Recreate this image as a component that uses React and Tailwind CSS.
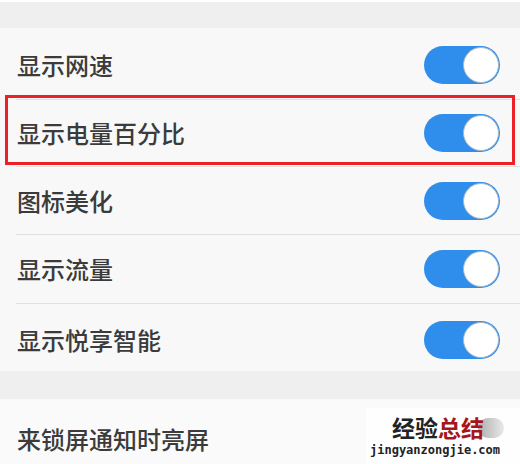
import React from "react";

const cjk = { fontFamily: '"Noto Sans CJK SC", "Noto Sans", sans-serif' };

function Toggle({ on = true }) {
  return (
    <div className={`relative w-[76px] h-[38px] rounded-full ${on ? "bg-[#2f8eec]" : "bg-[#dcdcdc]"}`}>
      <div
        className={`absolute top-[1px] ${on ? "right-[1px]" : "left-[1px]"} w-[36px] h-[36px] rounded-full bg-white border-[1.5px] border-[#a9b7c2]`}
      />
    </div>
  );
}

function Row({ label, h, divider = true }) {
  return (
    <div className={`flex flex-col ${h}`}>
      <div className="flex-1 flex items-center justify-between pl-[17px] pr-[20px]">
        <span className="text-[24px] font-medium leading-none text-[#3b3b3b]" style={cjk}>
          {label}
        </span>
        <Toggle />
      </div>
      <div className={`ml-[16px] h-[1.5px] ${divider ? "bg-[#e0e0e0]" : "bg-transparent"}`} />
    </div>
  );
}

export default function App() {
  return (
    <div className="relative w-[520px] h-[464px] overflow-hidden bg-[#f8f8f8]">
      <div className="h-[28px] bg-[#efefef] border-t-2 border-white" />
      <Row label="显示网速" h="h-[72px] pt-[4px]" />
      <Row label="显示电量百分比" h="h-[67px]" />
      <Row label="图标美化" h="h-[68px] pt-[2px]" />
      <Row label="显示流量" h="h-[69px]" />
      <Row label="显示悦享智能" h="h-[67px] pt-[6px]" divider={false} />
      <div className="h-[28px] bg-[#efefef]" />
      <div className="flex items-center pl-[17px] h-[80px] bg-[#fafafa]">
        <span className="text-[24px] font-medium leading-none text-[#3b3b3b]" style={cjk}>
          来锁屏通知时亮屏
        </span>
      </div>

      {/* red highlight box */}
      <div className="absolute left-[5px] top-[95px] w-[510px] h-[70px] border-[3px] border-[#ec2127]" />

      {/* watermark */}
      <div className="absolute right-0 bottom-0 w-[154px] h-[56px] bg-white/80 flex flex-col items-start pl-[4px] pt-[8px] gap-[5px]">
        <div className="relative ml-[22px] flex text-[23px] font-bold leading-none" style={cjk}>
          <div className="absolute left-[86px] top-[2px] w-[26px] h-[20px] rounded-full bg-gradient-to-r from-[#9a9a9a] to-[#e4e4e4] opacity-80" />
          <span className="relative text-[#222]">经验</span>
          <span className="relative text-[#a4161c]">总结</span>
        </div>
        <span
          className="text-[12px] font-bold leading-none text-[#222]"
          style={{ fontFamily: '"DejaVu Sans Mono", "Liberation Mono", monospace' }}
        >
          jingyanzongjie.com
        </span>
      </div>
    </div>
  );
}
